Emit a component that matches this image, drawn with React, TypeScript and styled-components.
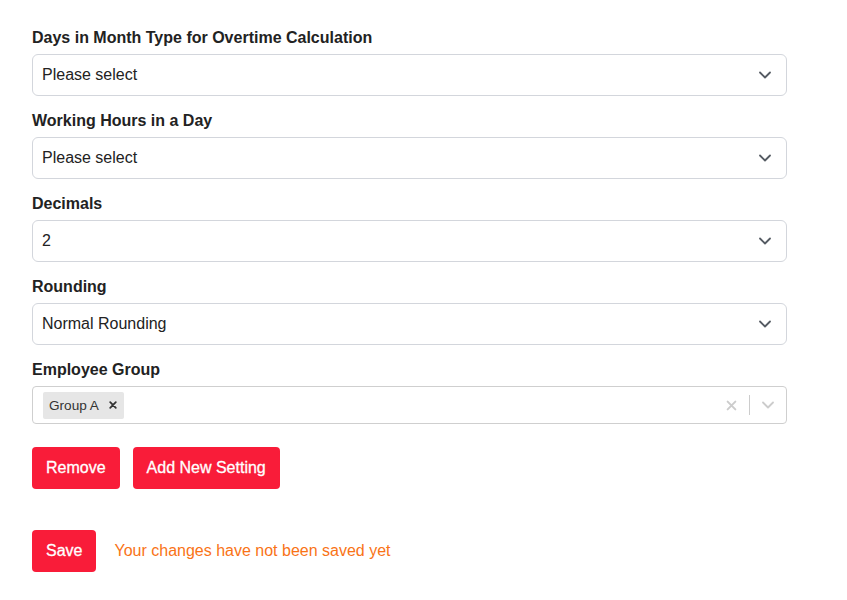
import React from 'react'
import styled, { createGlobalStyle } from 'styled-components'

const GlobalStyle = createGlobalStyle`
    body {
        margin: 0;
        background: #ffffff;
        font-family: "Liberation Sans", Arial, Helvetica, sans-serif;
        color: #222222;
    }
`

interface IField {
    label: string
    value: string
}

const fields: IField[] = [
    { label: 'Days in Month Type for Overtime Calculation', value: 'Please select' },
    { label: 'Working Hours in a Day', value: 'Please select' },
    { label: 'Decimals', value: '2' },
    { label: 'Rounding', value: 'Normal Rounding' },
]

const Chevron = ({ color }: { color: string }) => (
    <svg width="12" height="8" viewBox="0 0 12 8" fill="none">
        <path d="M1 1.5 L6 6.5 L11 1.5" stroke={color} strokeWidth="1.8" strokeLinecap="round" strokeLinejoin="round" />
    </svg>
)

const Cross = ({ size, color, width }: { size: number, color: string, width: number }) => (
    <svg width={size} height={size} viewBox="0 0 10 10" fill="none">
        <path d="M1.5 1.5 L8.5 8.5 M8.5 1.5 L1.5 8.5" stroke={color} strokeWidth={width} strokeLinecap="round" />
    </svg>
)

export default function App() {
    return (
        <Page>
            <GlobalStyle />

            {fields.map((field) => (
                <Field key={field.label}>
                    <Label>{field.label}</Label>
                    <SelectBox>
                        <SelectValue>{field.value}</SelectValue>
                        <Chevron color="#555b63" />
                    </SelectBox>
                </Field>
            ))}

            <Field>
                <Label>Employee Group</Label>
                <MultiBox>
                    <ValueList>
                        <Chip>
                            <ChipLabel>Group A</ChipLabel>
                            <ChipRemove><Cross size={8} color="#333333" width={2.2} /></ChipRemove>
                        </Chip>
                    </ValueList>
                    <Indicators>
                        <Indicator><Cross size={11} color="#cccccc" width={1.8} /></Indicator>
                        <Separator />
                        <Indicator><Chevron color="#cccccc" /></Indicator>
                    </Indicators>
                </MultiBox>
            </Field>

            <ButtonRow>
                <RedButton>Remove</RedButton>
                <RedButton>Add New Setting</RedButton>
            </ButtonRow>

            <SaveRow>
                <RedButton>Save</RedButton>
                <Warning>Your changes have not been saved yet</Warning>
            </SaveRow>
        </Page>
    )
}

const Page = styled.div`
    display: flex;
    flex-direction: column;
    width: 755px;
    padding: 25px 60px 28px 32px;
`

const Field = styled.div`
    display: flex;
    flex-direction: column;
    margin-bottom: 12px;
`

const Label = styled.label`
    display: block;
    height: 24px;
    margin-bottom: 5px;
    font-size: 16px;
    font-weight: 700;
    line-height: 26px;
    color: #222222;
`

const SelectBox = styled.div`
    display: flex;
    justify-content: space-between;
    align-items: center;
    box-sizing: border-box;
    height: 42px;
    padding: 0 15px 0 9px;
    border: 1px solid #d3d6dc;
    border-radius: 6px;
    background: #ffffff;
`

const SelectValue = styled.span`
    font-size: 16px;
    color: #222222;
`

const MultiBox = styled.div`
    display: flex;
    align-items: center;
    box-sizing: border-box;
    height: 38px;
    border: 1px solid #cfcfcf;
    border-radius: 4px;
    background: #ffffff;
`

const ValueList = styled.div`
    display: flex;
    flex: 1;
    align-items: center;
    padding: 0 8px 0 10px;
`

const Chip = styled.div`
    display: flex;
    align-items: center;
    height: 27px;
    border-radius: 2px;
    background: #e6e6e6;
`

const ChipLabel = styled.span`
    padding: 0 6px;
    font-size: 13.6px;
    color: #333333;
`

const ChipRemove = styled.span`
    display: flex;
    align-items: center;
    padding: 0 7px 0 4px;
`

const Indicators = styled.div`
    display: flex;
    align-items: center;
    height: 100%;
`

const Indicator = styled.div`
    display: flex;
    align-items: center;
    justify-content: center;
    width: 36px;
    height: 100%;
`

const Separator = styled.span`
    align-self: center;
    width: 1px;
    height: 20px;
    background: #cccccc;
`

const ButtonRow = styled.div`
    display: flex;
    gap: 13px;
    margin-top: 11px;
`

const SaveRow = styled.div`
    display: flex;
    align-items: center;
    gap: 18px;
    margin-top: 41px;
`

const RedButton = styled.button`
    height: 42px;
    padding: 0 14px;
    border: none;
    border-radius: 4px;
    background: #f91c39;
    font-family: "Liberation Sans", Arial, sans-serif;
    font-size: 16px;
    font-weight: 500;
    color: #ffffff;
    -webkit-text-stroke: 0.3px #ffffff;
    cursor: pointer;
`

const Warning = styled.span`
    font-size: 16px;
    color: #f97316;
`
